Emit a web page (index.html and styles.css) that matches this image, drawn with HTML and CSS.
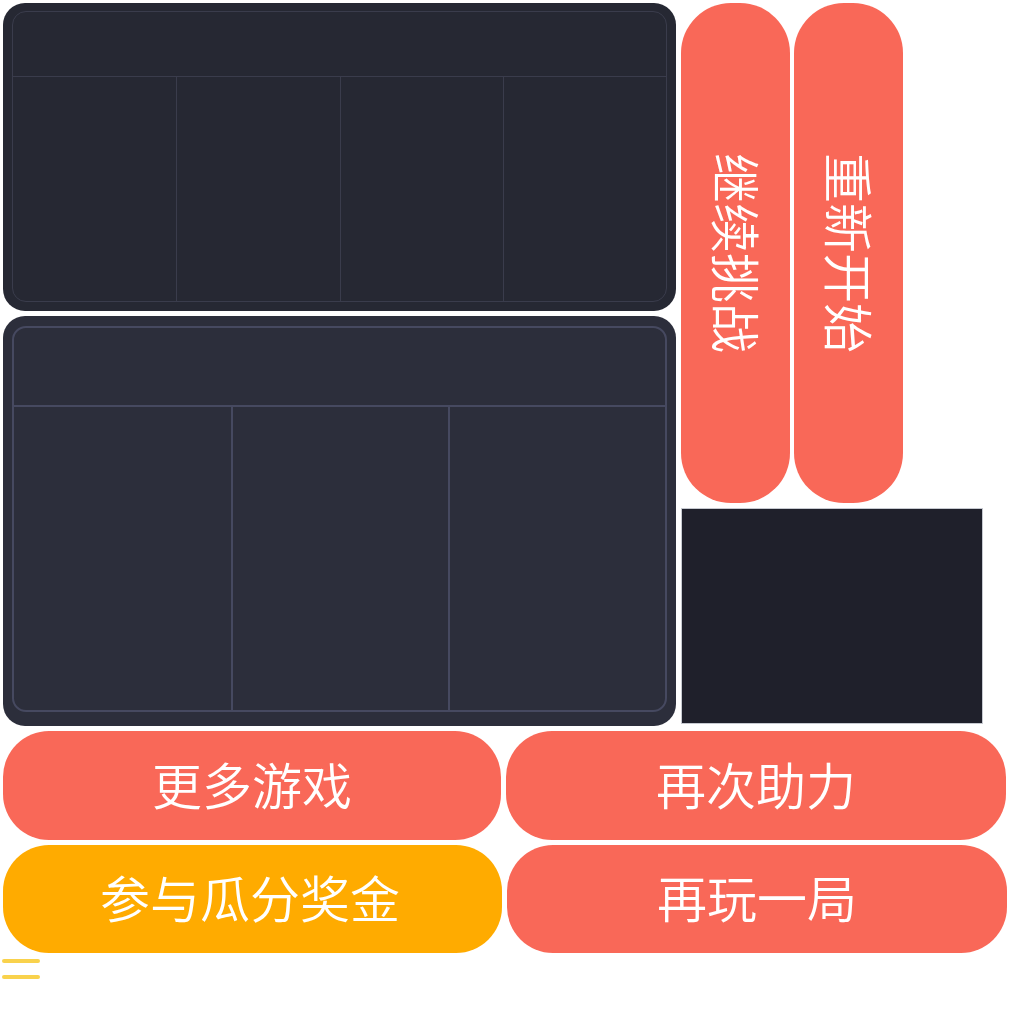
FILE: index.html
```html
<!DOCTYPE html>
<html lang="zh-CN">
<head>
	<meta charset="UTF-8">
	<title>game over</title>
<link rel="stylesheet" href="styles.css">
</head>
<body>
<div class="page">
	<div class="top">
		<div class="boards">
			<div class="board board-a">
				<div class="grid">
					<div class="grid-head"></div>
					<div class="grid-row cols4">
						<div class="cell"></div><div class="cell"></div><div class="cell"></div><div class="cell"></div>
					</div>
				</div>
			</div>
			<div class="board board-b">
				<div class="grid">
					<div class="grid-head"></div>
					<div class="grid-row cols3">
						<div class="cell"></div><div class="cell"></div><div class="cell"></div>
					</div>
				</div>
			</div>
		</div>
		<div class="side">
			<div class="side-btns">
				<div class="btn vbtn">继续挑战</div>
				<div class="btn vbtn">重新开始</div>
			</div>
			<div class="screen"></div>
		</div>
	</div>
	<div class="actions">
		<div class="row">
			<div class="btn hbtn w498">更多游戏</div>
			<div class="btn hbtn w500">再次助力</div>
		</div>
		<div class="row">
			<div class="btn hbtn yellow w499">参与瓜分奖金</div>
			<div class="btn hbtn w500">再玩一局</div>
		</div>
	</div>
	<div class="menu"><i></i><i></i></div>
</div>
</body>
</html>
```

FILE: styles.css
```css
*{margin:0;padding:0;box-sizing:border-box;}
body{background:#fff;font-family:"Noto Sans CJK SC","Noto Sans",sans-serif;}
.page{padding:3px 0 0 3px;width:1024px;}
.top{display:flex;gap:5px;}
.boards{display:flex;flex-direction:column;gap:5px;width:673px;}
.board{border-radius:22px;}
.board-a{background:#262833;height:308px;padding:8px 9px 9px 9px;}
.board-b{background:#2c2e3b;height:410px;padding:10px 9px 14px 9px;}
.grid{height:100%;display:flex;flex-direction:column;border-radius:14px;}
.board-a .grid{border:1px solid #3a3c4c;}
.board-b .grid{border:2px solid #464960;}
.board-a .grid-head{height:65px;border-bottom:1px solid #3a3c4c;}
.board-b .grid-head{height:79px;border-bottom:2px solid #464960;}
.grid-row{flex:1;display:grid;}
.cols4{grid-template-columns:repeat(4,1fr);}
.cols3{grid-template-columns:repeat(3,1fr);}
.board-a .cell+.cell{border-left:1px solid #3a3c4c;}
.board-b .cell+.cell{border-left:2px solid #464960;}
.side{display:flex;flex-direction:column;gap:5px;}
.side-btns{display:flex;gap:4px;}
.btn{background:#f96858;color:#fff;display:flex;align-items:center;justify-content:center;font-size:50px;font-weight:350;line-height:1;}
.vbtn{width:109px;height:500px;border-radius:50px;writing-mode:vertical-rl;text-orientation:sideways;padding-left:4px;}
.screen{width:302px;height:216px;background:#1f202b;border:1px solid #c6c9d0;}
.actions{display:flex;flex-direction:column;gap:5px;margin-top:5px;}
.row{display:flex;gap:5px;}
.hbtn{height:109px;border-radius:46px;padding-bottom:6px;}
.row+.row .hbtn{height:108px;}
.w498{width:498px;}
.w499{width:499px;padding-right:5px;}
.w500{width:500px;}
.yellow{background:#ffab00;}
.menu{display:flex;flex-direction:column;gap:12px;margin:6px 0 0 -1px;width:38px;}
.menu i{display:block;height:4px;border-radius:2px;background:#f9d24c;}
```
